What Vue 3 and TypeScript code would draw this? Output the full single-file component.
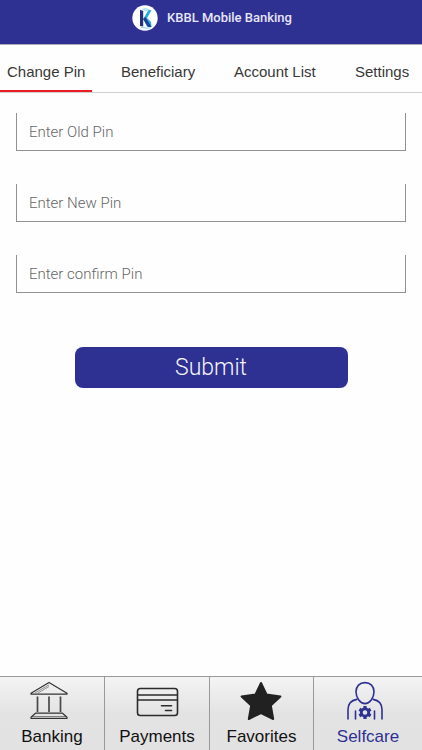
<script setup lang="ts">
import { ref } from 'vue'

interface PinField {
  id: string
  label: string
}

const tabs: string[] = ['Change Pin', 'Beneficiary', 'Account List', 'Settings']
const activeTab = ref<string>('Change Pin')

const fields: PinField[] = [
  { id: 'old-pin', label: 'Enter Old Pin' },
  { id: 'new-pin', label: 'Enter New Pin' },
  { id: 'confirm-pin', label: 'Enter confirm Pin' },
]
const pins = ref<Record<string, string>>({})

const sections: string[] = ['Banking', 'Payments', 'Favorites', 'Selfcare']
const activeSection = ref<string>('Selfcare')
</script>

<template>
  <div class="screen">
    <header class="app-bar">
      <svg class="logo" viewBox="0 0 26 26" aria-hidden="true">
        <circle cx="13" cy="13" r="12.7" fill="#fff" />
        <path d="M8 4.8 11.200 6V21.500L8 21z" fill="#24307c" />
        <path d="M9.500 4 13 2.800 18 4.300 14 6.800z" fill="#b9e6f5" />
        <path d="M11.200 14 16.500 5 19.500 5.300 15 13 19 17 19.500 22 15 21.500z" fill="#29a9e0" />
        <path d="M11 14 13.500 12 19.500 22h-3.500z" fill="#1d4494" />
        <path d="M9 22.200 15 23.200 18.500 22.800" fill="none" stroke="#8bd5f0" />
      </svg>
      <h1 class="title">KBBL Mobile Banking</h1>
    </header>

    <nav class="tabs">
      <button
        v-for="tab in tabs"
        :key="tab"
        type="button"
        class="tab"
        :class="{ active: tab === activeTab }"
        @click="activeTab = tab"
      >
        {{ tab }}
      </button>
    </nav>

    <main class="content">
      <form class="pin-form" @submit.prevent>
        <input
          v-for="field in fields"
          :id="field.id"
          :key="field.id"
          v-model="pins[field.id]"
          class="field"
          type="password"
          inputmode="numeric"
          :placeholder="field.label"
          :aria-label="field.label"
        />
        <button class="submit" type="submit">Submit</button>
      </form>
    </main>

    <nav class="bottom-bar">
      <button
        v-for="section in sections"
        :key="section"
        type="button"
        class="section"
        :class="{ active: section === activeSection }"
        @click="activeSection = section"
      >
        <svg v-if="section === 'Banking'" class="icon" viewBox="3 0 44 40" fill="none" stroke="#333" stroke-width="1.200" stroke-linejoin="round" aria-hidden="true">
          <path d="M22 1.500 4 12.200v1h36v-1z" />
          <path d="M8 12 22 3.800M11 12 22 5.500" stroke="#777" stroke-width=".8" />
          <path d="M10.500 15.500v15.500M22 15.500v15.500M33.500 15.500v15.500" stroke="#484848" stroke-width="1.700" />
          <path d="M8.500 32.200h27l4.500 4v1.300H4v-1.300z" />
          <path d="M5 35.800h34" stroke-width=".8" />
        </svg>
        <svg v-else-if="section === 'Payments'" class="icon" viewBox="-1 -1 44 40" fill="none" stroke="#2b2b2b" stroke-width="1.600" stroke-linecap="round" aria-hidden="true">
          <rect x="1.500" y="6.500" width="40" height="27" rx="2.800" />
          <path d="M1.500 13h40M1.500 18h40" stroke-linecap="butt" />
          <path d="M25.500 23.800h10M29.500 28.500h6" />
        </svg>
        <svg v-else-if="section === 'Favorites'" class="icon" viewBox="1 0 44 40" fill="#222122" stroke="#222122" stroke-width="2" stroke-linejoin="round" aria-hidden="true">
          <path d="M22 2 27.500 13.500 41.400 15.400 31.800 24.500 34.200 38 22 32 9.800 38 12.200 24.500 2.600 15.400 16.500 13.500z" />
        </svg>
        <svg v-else class="icon" viewBox="3 0 44 40" fill="none" stroke="#2e3192" stroke-width="1.600" stroke-linecap="round" aria-hidden="true">
          <path d="M22 1.600c-5.400 0-9 3.800-9 9.200 0 6.200 4.300 11.800 9 11.800s9-5.600 9-11.800c0-5.400-3.600-9.200-9-9.200z" />
          <path d="M13.800 18.400C8.500 19.400 5 22.600 5 28.500V38M30.200 18.400C35.500 19.400 39 22.600 39 28.500V38M12.500 30V38M31.500 30V38" />
          <circle cx="22" cy="31.500" r="3.700" stroke-width="2.800" />
          <g fill="#2e3192" stroke="none">
            <rect x="20.400" y="25" width="3.200" height="3" />
            <rect x="20.400" y="25" width="3.200" height="3" transform="rotate(60 22 31.500)" />
            <rect x="20.400" y="25" width="3.200" height="3" transform="rotate(120 22 31.500)" />
            <rect x="20.400" y="25" width="3.200" height="3" transform="rotate(180 22 31.500)" />
            <rect x="20.400" y="25" width="3.200" height="3" transform="rotate(240 22 31.500)" />
            <rect x="20.400" y="25" width="3.200" height="3" transform="rotate(300 22 31.500)" />
          </g>
        </svg>
        <span>{{ section }}</span>
      </button>
    </nav>
  </div>
</template>

<style>
body {
  margin: 0;
  background: #fefefe;
}
</style>

<style scoped>
.screen {
  display: flex;
  flex-direction: column;
  min-height: 100vh;
  font-family: Roboto, sans-serif;
}

button {
  margin: 0;
  border: 0;
  background: none;
  cursor: pointer;
}

.app-bar {
  display: flex;
  align-items: center;
  justify-content: center;
  gap: 9px;
  box-sizing: border-box;
  height: 45px;
  padding: 0 0 8px 2px;
  background: #2e3192;
  border-bottom: 1px solid #aaa9bd;
}

.logo {
  width: 26px;
  height: 26px;
}

.title {
  margin: 0;
  color: #e6e6fa;
  font-size: 13px;
  font-weight: 500;
  line-height: 16px;
}

.tabs {
  display: grid;
  grid-template-columns: 114fr 113fr 121fr 74fr;
  justify-items: start;
  border-bottom: 1px solid #d0d0d0;
}

.tab {
  padding: 8px 7px 0;
  height: 47px;
  border-bottom: 2px solid transparent;
  color: #383838;
  font-family: "Liberation Sans", Arial, sans-serif;
  font-size: 15px;
  line-height: 20px;
  white-space: nowrap;
}

.tab.active {
  border-bottom-color: #ed1c24;
}

.content {
  flex: 1;
  padding: 20px 16px;
}

.pin-form {
  display: flex;
  flex-direction: column;
  gap: 33px;
}

.field {
  box-sizing: border-box;
  width: 100%;
  height: 38px;
  padding: 0 12px;
  border: solid #919191;
  border-width: 0 1px 1px;
  border-radius: 0;
  background: transparent;
  color: #333;
  font-family: Roboto, sans-serif;
  font-size: 15px;
  font-weight: 300;
}

.field::placeholder {
  color: #666;
  opacity: 1;
}

.submit {
  align-self: center;
  width: 70%;
  height: 41px;
  margin-top: 21px;
  border-radius: 8px;
  background: #2e3192;
  color: #f4f4fc;
  font-family: Roboto, sans-serif;
  font-size: 23px;
  font-weight: 300;
}

.bottom-bar {
  display: grid;
  grid-template-columns: 105fr 105fr 104fr 108fr;
  border-top: 1px solid #999;
}

.section {
  display: flex;
  flex-direction: column;
  align-items: center;
  gap: 6px;
  padding: 4px 0 3px;
  border-right: 1px solid #999;
  background: linear-gradient(#f4f4f4, #e3e3e3 50%, #e2e2e2);
  color: #111;
  font-family: "Liberation Sans", Arial, sans-serif;
  font-size: 17px;
  line-height: 20px;
}

.section:last-child {
  border-right: 0;
}

.section.active {
  color: #2e3192;
}

.icon {
  width: 44px;
  height: 40px;
}
</style>
